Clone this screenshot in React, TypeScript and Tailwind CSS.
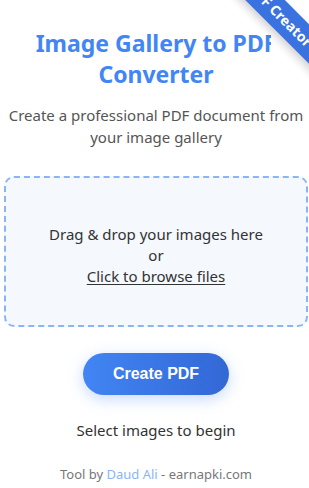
import React from "react";

export default function App() {
  return (
    <div
      className="relative min-h-screen overflow-hidden bg-white pl-1 pr-px text-center"
      style={{ fontFamily: '"Noto Sans", "Open Sans", sans-serif' }}
    >
      {/* corner ribbon: white backing hides the tail of the title */}
      <div className="absolute top-0 right-0 z-10 h-[68px] w-[38px] bg-white" />
      <div className="absolute top-[1px] right-[-46px] z-20 h-[28px] w-[150px] rotate-45 bg-[#3a73e0] text-[14px] font-bold leading-[28px] text-white shadow-[0_4px_8px_rgba(0,0,0,0.18)]">
        PDF Creator
      </div>

      <h1 className="mt-[28px] text-[23px] font-bold leading-[31px] text-[#4285f4]">
        Image Gallery to PDF
        <br />
        Converter
      </h1>

      <p className="mt-[14px] text-[15px] leading-[22px] text-[#555]">
        Create a professional PDF document from your image gallery
      </p>

      <div className="mt-[28px] rounded-[10px] border-2 border-dashed border-[#8ab4f8] bg-[#f5f8fd] pt-[46px] pb-[38px] text-[15px] leading-[21px] text-[#333]">
        <p>Drag &amp; drop your images here</p>
        <p>or</p>
        <p className="underline underline-offset-2">Click to browse files</p>
      </div>

      <div className="mt-[26px] flex justify-center">
        <button
          className="h-[42px] w-[146px] rounded-full bg-gradient-to-r from-[#4285f4] to-[#3367d6] text-[16px] font-bold text-white shadow-[0_4px_15px_rgba(66,133,244,0.3)]"
          style={{ fontFamily: '"Liberation Sans", Arial, sans-serif' }}
        >
          Create PDF
        </button>
      </div>

      <p className="mt-[24px] text-[15px] leading-[22px] text-[#333]">
        Select images to begin
      </p>

      <p className="mt-[23px] text-[13px] leading-[20px] text-[#777]">
        Tool by <span className="text-[#8ab4f8]">Daud Ali</span> - earnapki.com
      </p>
    </div>
  );
}
